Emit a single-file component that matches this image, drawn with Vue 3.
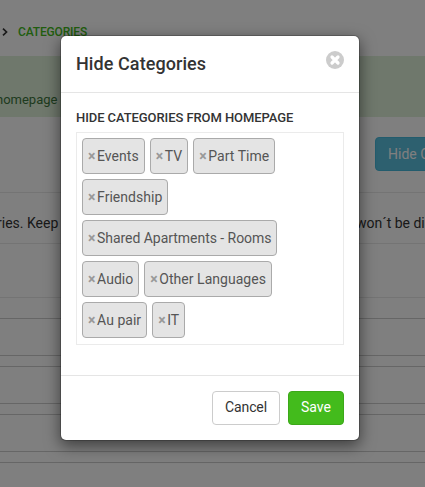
<script setup>
const rows = [
  ['Events', 'TV', 'Part Time'],
  ['Friendship'],
  ['Shared Apartments - Rooms'],
  ['Audio', 'Other Languages'],
  ['Au pair', 'IT'],
]
</script>

<template>
  <div class="screen">
    <div class="page">
      <nav class="crumbs">
        <svg width="6" height="8" viewBox="0 0 6 8"><path d="M1 .7 4.5 4 1 7.3" fill="none" stroke="#333" stroke-width="1.7" /></svg>
        <span>CATEGORIES</span>
      </nav>
      <div class="notice"><span>homepage</span></div>
      <div class="toolbar"><button class="info">Hide Categories</button></div>
      <div class="help"><span class="help-start">ries. Keep</span><span>won´t be displayed</span></div>
      <div class="spacer"></div>
      <div class="list">
        <div v-for="n in 4" :key="n" class="item"></div>
      </div>
    </div>
    <div class="backdrop">
      <section class="modal">
        <header class="head">
          <h4>Hide Categories</h4>
          <svg class="close" width="18" height="18" viewBox="0 0 18 18">
            <circle cx="9" cy="9" r="9" fill="#ccc" />
            <path d="M6 6 12 12M12 6 6 12" stroke="#fff" stroke-width="3.2" stroke-linecap="round" />
          </svg>
        </header>
        <div class="body">
          <label>HIDE CATEGORIES FROM HOMEPAGE</label>
          <div class="select">
            <div v-for="(row, i) in rows" :key="i" class="row">
              <span v-for="name in row" :key="name" class="chip" :class="{ long: name.length > 20 }"><b>×</b>{{ name }}</span>
            </div>
          </div>
        </div>
        <footer class="foot">
          <button class="btn">Cancel</button>
          <button class="btn save">Save</button>
        </footer>
      </section>
    </div>
  </div>
</template>

<style>
body { margin: 0; overflow: hidden; }
</style>

<style scoped>
* { box-sizing: border-box; }
.screen {
  position: relative;
  width: 425px;
  height: 487px;
  overflow: hidden;
  font: 14px/20px Roboto, sans-serif;
  color: #333;
}
.page { height: 487px; overflow: hidden; background: #fff; white-space: nowrap; }
.crumbs {
  display: flex;
  align-items: center;
  gap: 10px;
  height: 56px;
  padding: 8px 0 0 2px;
  font-size: 12px;
  font-weight: 500;
  letter-spacing: -.15px;
  color: #43bb1c;
}
.notice {
  height: 61px;
  padding: 34px 0 0;
  background: #dff0d8;
  color: #3c763d;
  font-size: 13px;
}
.notice span { margin-left: -4px; }
.toolbar { height: 76px; padding: 20px 0 0 375px; border-bottom: 1px solid #e8e8e8; }
.info {
  height: 34px;
  padding: 0 12px;
  border: 1px solid #46b8da;
  border-radius: 4px;
  background: #5bc0de;
  color: #fff;
  font: inherit;
}
.help { display: flex; height: 51px; padding-top: 20px; border-bottom: 1px solid #e8e8e8; }
.help-start { flex: 0 0 359px; margin-left: -3px; }
.spacer { height: 54px; border-bottom: 1px solid #e8e8e8; }
.list { display: flex; flex-direction: column; gap: 10px; padding-top: 20px; }
.item { flex: none; height: 38px; border: solid #ccc; border-width: 1px 0; }
.backdrop {
  position: absolute;
  inset: 0;
  padding: 36px 66px 0 61px;
  background: rgba(0, 0, 0, .5);
}
.modal {
  width: 298px;
  height: 404px;
  border-radius: 5px;
  background: #fff;
  box-shadow: 0 0 0 1px rgba(0, 0, 0, .2), 0 5px 15px 1px rgba(0, 0, 0, .5);
}
.head {
  display: flex;
  justify-content: space-between;
  height: 57px;
  padding: 15px 15px 0;
  border-bottom: 1px solid #e5e5e5;
}
h4 { margin: 0; font-size: 18px; line-height: 25px; font-weight: 500; letter-spacing: .08px; }
.close { display: block; }
.body { height: 282px; padding: 15px 15px 0; }
label { display: block; height: 24px; font-size: 13px; line-height: 20px; font-weight: 500; letter-spacing: -.08px; }
.select {
  display: flex;
  flex-direction: column;
  gap: 5px;
  height: 213px;
  padding: 5px;
  border: 1px solid #ebebeb;
}
.row { display: flex; gap: 5px; }
.chip {
  height: 36px;
  padding: 0 5px;
  border: 1px solid #aaa;
  border-radius: 4px;
  background: #e4e4e4;
  color: #555;
  line-height: 34px;
  letter-spacing: .03px;
  white-space: nowrap;
}
.chip.long { letter-spacing: -.04px; }
.chip b { margin-right: 1.6px; color: #999; font-weight: 700; }
.foot {
  display: flex;
  justify-content: flex-end;
  gap: 8px;
  padding: 15px;
  border-top: 1px solid #e5e5e5;
}
.btn {
  height: 34px;
  padding: 0 12px 2px;
  border: 1px solid #ccc;
  border-radius: 4px;
  background: #fff;
  color: #333;
  font: inherit;
  line-height: 20px;
  letter-spacing: -.08px;
}
.save { border-color: #3ca819; background: #43bb1c; color: #fff; letter-spacing: 0; }
</style>
